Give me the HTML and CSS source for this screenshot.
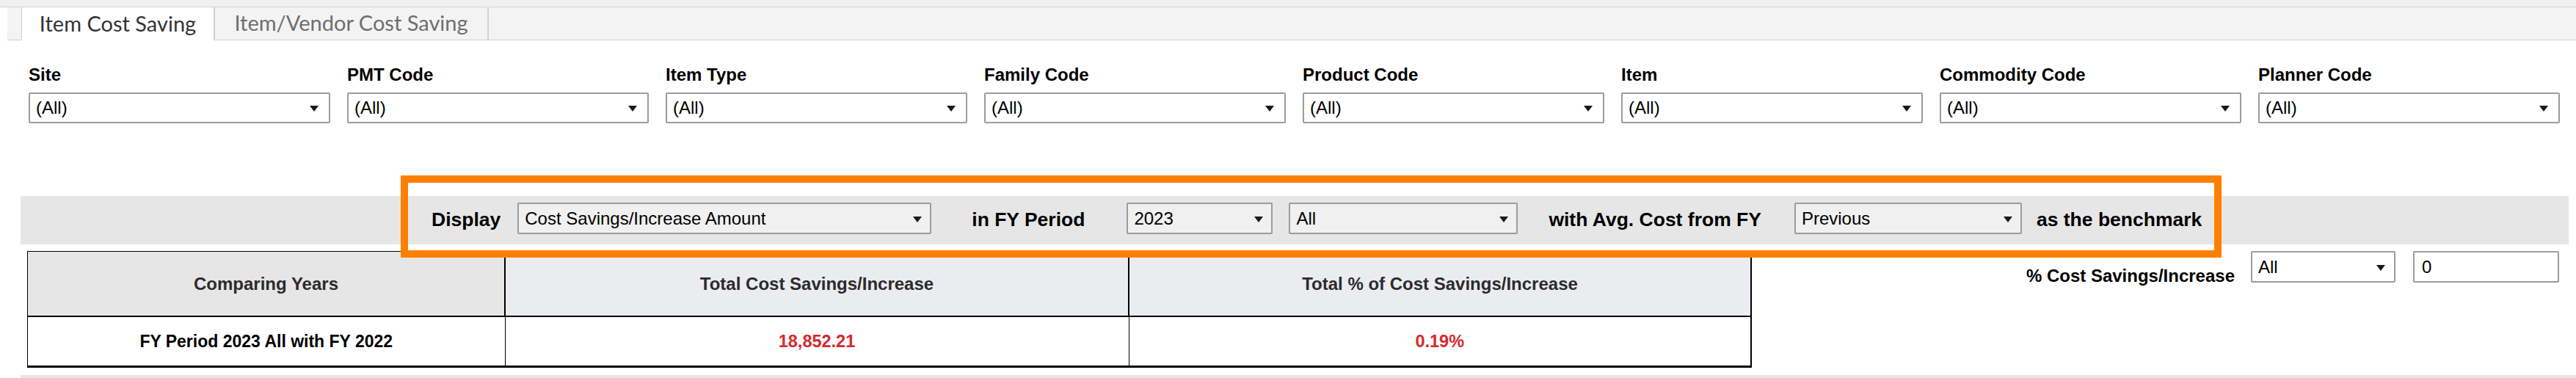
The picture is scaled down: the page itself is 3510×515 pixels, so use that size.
FILE: index.html
```html
<!DOCTYPE html>
<html lang="en">
<head>
<meta charset="UTF-8">
<meta name="viewport" content="width=device-width, initial-scale=1.0">
<title>Item Cost Saving</title>
<link rel="stylesheet" href="styles.css">
</head>
<body>

<div class="page">
  <div class="topbar"></div>

  <div class="tabs">
    <div class="tab-gap"></div>
    <div class="tab active">Item Cost Saving</div>
    <div class="tab">Item/Vendor Cost Saving</div>
    <div class="tab-fill"></div>
  </div>

  <div class="filters">
    <div class="filter">
      <div class="filter-label">Site</div>
      <div class="dropdown"><span>(All)</span></div>
    </div>
    <div class="filter">
      <div class="filter-label">PMT Code</div>
      <div class="dropdown"><span>(All)</span></div>
    </div>
    <div class="filter">
      <div class="filter-label">Item Type</div>
      <div class="dropdown"><span>(All)</span></div>
    </div>
    <div class="filter">
      <div class="filter-label">Family Code</div>
      <div class="dropdown"><span>(All)</span></div>
    </div>
    <div class="filter">
      <div class="filter-label">Product Code</div>
      <div class="dropdown"><span>(All)</span></div>
    </div>
    <div class="filter">
      <div class="filter-label">Item</div>
      <div class="dropdown"><span>(All)</span></div>
    </div>
    <div class="filter">
      <div class="filter-label">Commodity Code</div>
      <div class="dropdown"><span>(All)</span></div>
    </div>
    <div class="filter">
      <div class="filter-label">Planner Code</div>
      <div class="dropdown"><span>(All)</span></div>
    </div>
  </div>

  <div class="band">
    <div class="band-label">Display</div>
    <div class="dropdown grey dd-display"><span>Cost Savings/Increase Amount</span></div>
    <div class="band-label lbl-period">in FY Period</div>
    <div class="dropdown grey dd-year"><span>2023</span></div>
    <div class="dropdown grey dd-all"><span>All</span></div>
    <div class="band-label lbl-avg">with Avg. Cost from FY</div>
    <div class="dropdown grey dd-prev"><span>Previous</span></div>
    <div class="band-label lbl-bench">as the benchmark</div>
  </div>

  <div class="results">
    <table class="summary">
      <tr>
        <th class="col-years">Comparing Years</th>
        <th class="col-total">Total Cost Savings/Increase</th>
        <th class="col-pct">Total % of Cost Savings/Increase</th>
      </tr>
      <tr>
        <td>FY Period 2023 All with FY 2022</td>
        <td class="value">18,852.21</td>
        <td class="value">0.19%</td>
      </tr>
    </table>

    <div class="threshold">
      <div class="threshold-label">% Cost Savings/Increase</div>
      <div class="dropdown dd-op"><span>All</span></div>
      <div class="text-box">0</div>
    </div>
  </div>

  <div class="bottom-strip"></div>

  <!-- annotation drawn over the parameter bar -->
  <div class="highlight"></div>
</div>

</body>
</html>
```

FILE: styles.css
```css
body {
  margin: 0;
  padding: 0;
  background-color: #fff;
  font-family: "Liberation Sans", Arial, sans-serif;
  color: #000;
}
.page {
  position: relative;
  width: 3510px;
  height: 515px;
  overflow: hidden;
}
.topbar {
  height: 9px;
  background-color: #f0f0f0;
  border-bottom: 1px solid #d4d4d4;
}

/* tabs */
.tabs {
  display: flex;
  height: 45px;
  margin-left: 10px;
  font-family: Lato, "Open Sans", sans-serif;
  font-weight: normal;
  font-size: 29px;
}
.tab-gap {
  width: 19px;
  background-color: #f3f3f3;
  border-bottom: 1px solid #cfcfcf;
}
.tab {
  width: 373px;
  box-sizing: border-box;
  display: flex;
  align-items: center;
  justify-content: center;
  padding-bottom: 3px;
  background-color: #f3f3f3;
  color: #6e6e6e;
  border-right: 2px solid #d2d2d2;
  border-bottom: 1px solid #cfcfcf;
  white-space: nowrap;
}
.tab.active {
  width: 264px;
  background-color: #fff;
  color: #333;
  border-left: 1px solid #d2d2d2;
  border-bottom: none;
}
.tab-fill {
  flex: 1;
  background-color: #f3f3f3;
  border-bottom: 1px solid #cfcfcf;
}

/* filter row */
.filters {
  display: grid;
  grid-template-columns: repeat(8, 411px);
  column-gap: 23px;
  padding-left: 39px;
  margin-top: 34px;
}
.filter-label {
  font-weight: bold;
  font-size: 24px;
  line-height: 26px;
  margin-bottom: 11px;
}
.dropdown {
  position: relative;
  box-sizing: border-box;
  height: 42px;
  display: flex;
  align-items: center;
  padding-left: 8px;
  font-size: 24px;
  background-color: #fff;
  border: 2px solid #9c9c9c;
  border-radius: 2px;
}
.dropdown::after {
  content: "";
  position: absolute;
  right: 14px;
  top: 50%;
  margin-top: -3px;
  border-left: 6px solid transparent;
  border-right: 6px solid transparent;
  border-top: 8px solid #1a1a1a;
}
.dropdown.grey {
  background-color: #f0f0f0;
  height: 43px;
}

/* parameter bar */
.band {
  display: flex;
  align-items: flex-start;
  box-sizing: border-box;
  height: 66px;
  margin: 99px 10px 0 28px;
  padding: 9px 0 0 560px;
  background-color: #e6e6e6;
}
.band-label {
  font-weight: bold;
  font-size: 26.5px;
  line-height: 43px;
  padding-top: 2px;
  white-space: nowrap;
}
.dd-display { width: 564px; margin-left: 23px; }
.lbl-period { margin-left: 55px; }
.dd-year { width: 199px; margin-left: 57px; }
.dd-all { width: 312px; margin-left: 22px; }
.lbl-avg { margin-left: 42px; }
.dd-prev { width: 310px; margin-left: 45px; }
.lbl-bench { margin-left: 20px; }
.band .dropdown::after { right: 11px; }

/* summary table and threshold */
.results {
  display: flex;
  align-items: flex-start;
  margin-top: 9px;
}
.summary {
  border-collapse: collapse;
  width: 2350px;
  margin-left: 37px;
  table-layout: fixed;
}
.summary th {
  height: 87px;
  padding: 0;
  font-size: 24px;
  color: #2b2b2b;
  background-color: #ebecf0;
  border: 1px solid #000;
  border-right-width: 2px;
  border-bottom: 2px solid #000;
}
.summary th.col-years {
  width: 649px;
  background-color: #e6e6e6;
}
.summary th.col-total {
  width: 848px;
}
.summary td {
  height: 66px;
  padding: 0;
  text-align: center;
  font-weight: bold;
  font-size: 23px;
  border: 1px solid #000;
  border-bottom: 3px solid #000;
}
.summary td:last-child {
  border-right-width: 2px;
}
.summary td.value {
  color: #d42a2d;
  font-size: 23.5px;
}
.threshold {
  display: flex;
  align-items: flex-end;
  margin-left: auto;
  margin-right: 23px;
}
.threshold-label {
  font-weight: bold;
  font-size: 24px;
  line-height: 24px;
  margin-bottom: -3px;
  margin-right: 22px;
  white-space: nowrap;
}
.dd-op {
  width: 197px;
  height: 43px;
}
.dd-op::after { right: 12px; }
.text-box {
  box-sizing: border-box;
  width: 199px;
  height: 43px;
  margin-left: 24px;
  display: flex;
  align-items: center;
  padding-left: 10px;
  font-size: 24px;
  border: 2px solid #9c9c9c;
  border-radius: 2px;
}
.bottom-strip {
  height: 6px;
  margin: 10px 0 0 28px;
  background-color: #e6e6e6;
}

.highlight {
  position: absolute;
  left: 546px;
  top: 239px;
  width: 2481px;
  height: 112px;
  box-sizing: border-box;
  border: 10px solid #ff8000;
}
```
